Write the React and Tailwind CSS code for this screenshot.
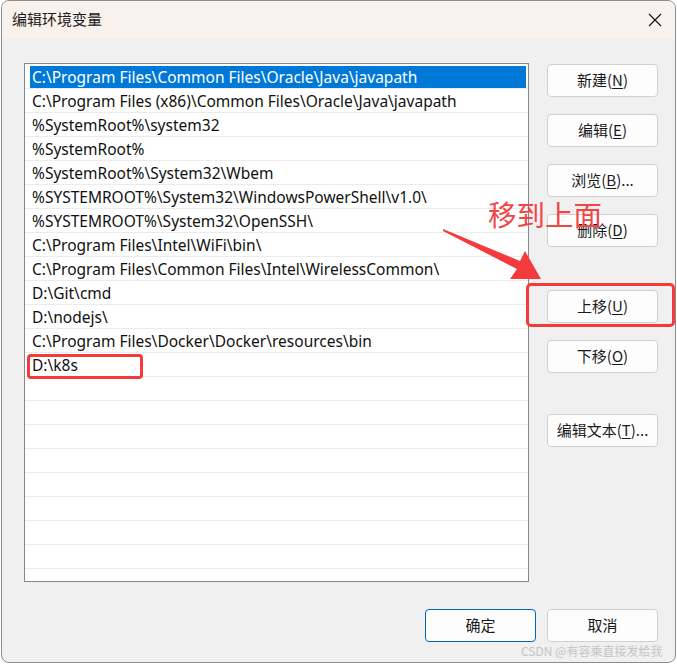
const paths = [
  'C:\\Program Files\\Common Files\\Oracle\\Java\\javapath',
  'C:\\Program Files (x86)\\Common Files\\Oracle\\Java\\javapath',
  '%SystemRoot%\\system32',
  '%SystemRoot%',
  '%SystemRoot%\\System32\\Wbem',
  '%SYSTEMROOT%\\System32\\WindowsPowerShell\\v1.0\\',
  '%SYSTEMROOT%\\System32\\OpenSSH\\',
  'C:\\Program Files\\Intel\\WiFi\\bin\\',
  'C:\\Program Files\\Common Files\\Intel\\WirelessCommon\\',
  'D:\\Git\\cmd',
  'D:\\nodejs\\',
  'C:\\Program Files\\Docker\\Docker\\resources\\bin',
  'D:\\k8s',
]

const font = { fontFamily: '"Segoe UI", "Noto Sans", "Noto Sans CJK SC", sans-serif' }

function Btn({ label, hot, tail = '', primary = false, className = '' }) {
  return (
    <button
      className={`flex h-[33px] w-[111px] items-center justify-center rounded-[4px] border bg-[#fdfdfd] text-[15px] text-[#1a1a1a] ${
        primary ? 'border-[#0067c0]' : 'border-[#d0d0d0]'
      } ${className}`}
    >
      {label}(<span className="underline underline-offset-2">{hot}</span>){tail}
    </button>
  )
}

export default function App() {
  const rows = [...paths, ...Array(9).fill('')]
  return (
    <div className="relative h-[664px] w-[677px] overflow-hidden bg-white" style={font}>
      <div className="ml-[1px] flex h-[663px] w-[675px] flex-col overflow-hidden rounded-lg border border-[#8c8c8c] bg-[#f0f0f0]">
        {/* title bar */}
        <div className="flex h-[37px] shrink-0 items-center justify-between bg-[#f9f1ec] pl-[10px] pr-[13px]">
          <span className="text-[15px] text-[#1a1a1a]" style={{ fontFamily: '"Noto Sans CJK SC", sans-serif' }}>
            编辑环境变量
          </span>
          <svg width="14" height="14" viewBox="0 0 14 14" className="mt-[1px]">
            <path d="M1 1L13 13M13 1L1 13" stroke="#1a1a1a" strokeWidth="1.3" fill="none" />
          </svg>
        </div>

        {/* body */}
        <div className="flex pl-[22px] pt-[25px]">
          <div className="h-[519px] w-[505px] overflow-hidden border border-[#828790] bg-white pt-[1px]">
            {rows.map((p, i) => (
              <div key={i} className="h-[24px] border-b border-[#ebebeb] pl-[5px] pr-[2px] pt-[1px]">
                <div
                  className={`h-[22px] pl-[2px] text-[15.5px] leading-[22px] whitespace-nowrap ${
                    i === 0 ? 'bg-[#0078d7] text-white' : 'text-[#111]'
                  }`}
                >
                  {p}
                </div>
              </div>
            ))}
          </div>

          <div className="ml-[18px] flex flex-col pt-[1px]" style={{ fontFamily: '"Noto Sans CJK SC", sans-serif' }}>
            <Btn label="新建" hot="N" />
            <Btn label="编辑" hot="E" className="mt-[17px]" />
            <Btn label="浏览" hot="B" tail="..." className="mt-[17px]" />
            <Btn label="删除" hot="D" className="mt-[17px]" />
            <Btn label="上移" hot="U" className="mt-[43px]" />
            <Btn label="下移" hot="O" className="mt-[17px]" />
            <Btn label="编辑文本" hot="T" tail="..." className="mt-[41px]" />
          </div>
        </div>

        {/* footer */}
        <div
          className="mt-[27px] flex justify-end gap-[11px] pr-[17px]"
          style={{ fontFamily: '"Noto Sans CJK SC", sans-serif' }}
        >
          <button className="flex h-[33px] w-[111px] items-center justify-center rounded-[4px] border border-[#0067c0] bg-[#fdfdfd] text-[15px] text-[#1a1a1a]">
            确定
          </button>
          <button className="flex h-[33px] w-[111px] items-center justify-center rounded-[4px] border border-[#d0d0d0] bg-[#fdfdfd] text-[15px] text-[#1a1a1a]">
            取消
          </button>
        </div>
      </div>

      {/* annotations */}
      <div className="absolute left-[27px] top-[354px] h-[25px] w-[116px] rounded-[4px] border-[3px] border-[#f43b3b]" />
      <div className="absolute left-[526px] top-[283px] h-[44px] w-[149px] rounded-[5px] border-[3px] border-[#f43b3b]" />
      <div
        className="absolute left-[488px] top-[196px] text-[28.5px] leading-[36px] text-[#f04646]"
        style={{ fontFamily: '"Noto Sans CJK SC", sans-serif' }}
      >
        移到上面
      </div>
      <svg className="absolute left-0 top-0" width="677" height="664" viewBox="0 0 677 664" pointerEvents="none">
        <polygon points="443,229 520,261 525,251 541,279 510,279 517,269 443,231" fill="#f43b3b" />
      </svg>

      <div
        className="absolute left-[521px] top-[643px] text-[12px] leading-[16px] text-[#c4c4c4]"
        style={{ fontFamily: '"Noto Sans CJK SC", sans-serif' }}
      >
        CSDN @有容乘直接发给我
      </div>
    </div>
  )
}
